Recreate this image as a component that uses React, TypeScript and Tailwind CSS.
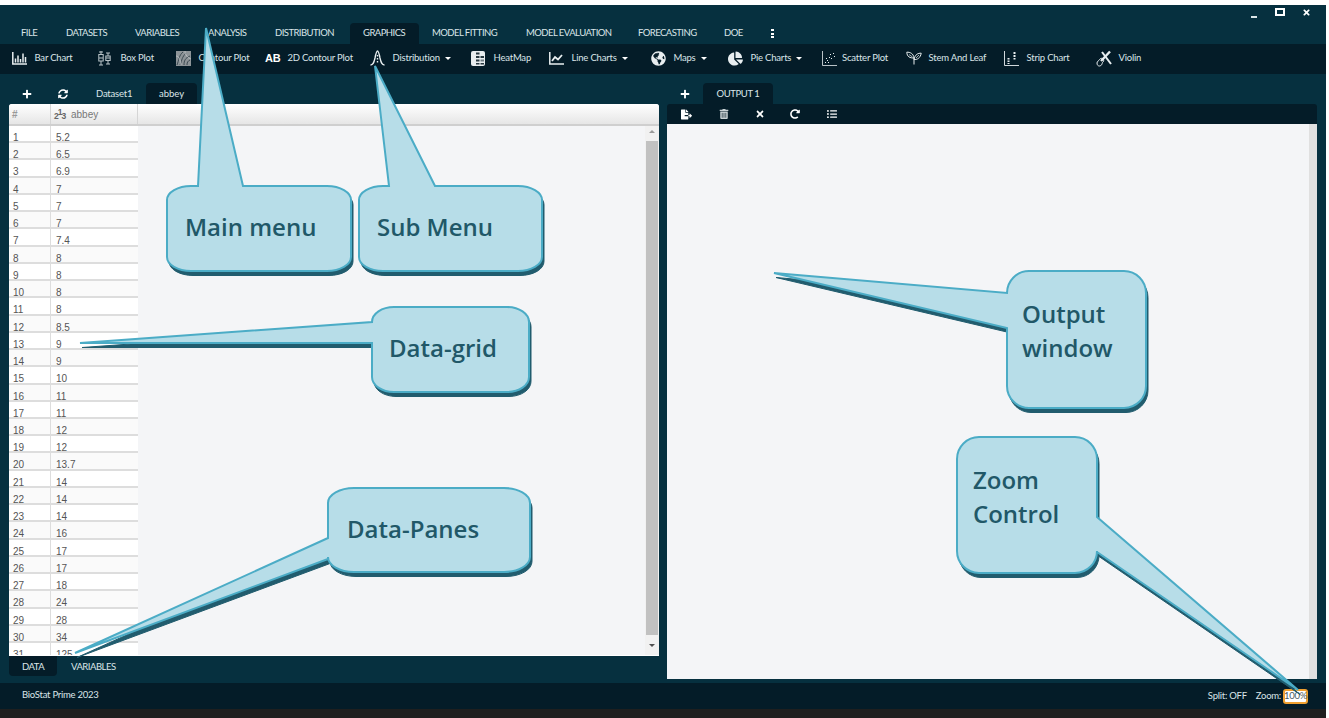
import type { ReactNode } from 'react'
import {
  FaChartPie, FaGlobeAmericas, FaPlus, FaSyncAlt, FaTrashAlt, FaTimes, FaRedoAlt, FaListUl, FaFileExport,
} from 'react-icons/fa'

const rows = ['5.2','6.5','6.9','7','7','7','7.4','8','8','8','8','8.5','9','9','10','11','11','12','12','13.7','14','14','14','16','17','17','18','24','28','34','125']

const menu = [
  { label: 'FILE', w: 'w-[45px]' },
  { label: 'DATASETS', w: 'w-[69px]' },
  { label: 'VARIABLES', w: 'w-[73px]' },
  { label: 'ANALYSIS', w: 'w-[67px]' },
  { label: 'DISTRIBUTION', w: 'w-[88px]' },
  { label: 'GRAPHICS', w: 'w-[69px]', active: true },
  { label: 'MODEL FITTING', w: 'w-[94px]' },
  { label: 'MODEL EVALUATION', w: 'w-[112px]' },
  { label: 'FORECASTING', w: 'w-[86px]' },
  { label: 'DOE', w: 'w-[47px]' },
]

function BarIcon() {
  return (
    <svg width="15" height="13" viewBox="0 0 15 13" fill="none" stroke="currentColor">
      <path d="M.8 0v12H15" strokeWidth="1.500" />
      <path d="M3.500 10.500V6.500M6 10.500V3.500M8.500 10.500V7M11 10.500V1.500M13.500 10.500V5" strokeWidth="1.500" />
    </svg>
  )
}

function BoxIcon() {
  return (
    <svg width="13" height="15" viewBox="0 0 13 15" fill="none" stroke="#b9c4c8" strokeWidth="1">
      <path d="M3 0v3M1 1h4M3 10v4M1 14h4M10 2v3M8 2h4M10 10v3M8 13h4" />
      <rect x=".8" y="3.500" width="4.400" height="6.500" />
      <rect x="7.800" y="5" width="4.400" height="4.500" />
      <path d="M1 7h4M8 7h4" />
    </svg>
  )
}

function ContourIcon() {
  return (
    <svg width="15" height="15" viewBox="0 0 15 15" fill="none">
      <rect width="15" height="15" fill="#8d9498" />
      <path d="M1 14C3 9 3 4 7 1M4 14C6 9 6 6 10 2M8 14C8 10 9 7 14 5M11 14c0-3 1-4 3-5" stroke="#3b4a52" strokeWidth="1" />
      <path d="M0 5c3 0 4 3 5 9M9 0c0 4 3 7 6 8" stroke="#c9cdd0" strokeWidth=".7" />
    </svg>
  )
}

function BellIcon() {
  return (
    <svg width="15" height="16" viewBox="0 0 15 16" fill="none" stroke="currentColor" strokeWidth="1.400">
      <path d="M.5 15c3 0 3.500-3 4.500-7C5.800 4 6.500 1 7.500 1s1.700 3 2.500 7c1 4 1.500 7 4.500 7" />
      <path d="M7.500 5v9" strokeDasharray="1.500 1.500" />
    </svg>
  )
}

function HeatIcon() {
  return (
    <svg width="14" height="15" viewBox="0 0 14 15">
      <rect width="14" height="15" rx="2" fill="#e8edef" />
      <path d="M5 1.500h3.500v2H5zM5 5h3.500v2H5zM9.500 5H13v2H9.500zM5 8.500h3.500v2H5zM9.500 12H13v1.500H9.500zM5 12h3.500v1.500H5z" fill="#26373f" />
      <path d="M9.500 8.500H13v2H9.500z" fill="#6f7c82" />
    </svg>
  )
}

function LineIcon() {
  return (
    <svg width="15" height="13" viewBox="0 0 15 13" fill="none" stroke="currentColor">
      <path d="M.8 0v12H15" strokeWidth="1.500" />
      <path d="M3 9l3-4 3 2.500L13 3" strokeWidth="1.800" />
    </svg>
  )
}

function ScatterIcon() {
  return (
    <svg width="15" height="15" viewBox="0 0 15 15" fill="currentColor">
      <path d="M.5 0v14.500H15" fill="none" stroke="currentColor" strokeWidth=".8" />
      <path d="M3 11h1v1H3zM5 9h1v1H5zM4 7h1v1H4zM7 6h1v1H7zM9 7h1v1H9zM8 3h1v1H8zM11 2h1v1h-1zM12 5h1v1h-1zM6 11h1v1H6z" />
    </svg>
  )
}

function LeafIcon() {
  return (
    <svg width="16" height="14" viewBox="0 0 16 14" fill="none" stroke="currentColor" strokeWidth="1">
      <path d="M8 13.500V7M8 7C4 7 1 6 .8 1.200 4 1 7.500 2.500 8 7zM8 8.500c3 .5 6.500-1.500 7.200-6.300C12 2 9 3.500 8 8.500z" />
      <path d="M3 3.500 6.500 6M13 4l-3 3" strokeWidth=".7" />
    </svg>
  )
}

function StripIcon() {
  return (
    <svg width="15" height="15" viewBox="0 0 15 15" fill="currentColor">
      <path d="M.5 0v14.500H15" fill="none" stroke="currentColor" strokeWidth=".9" />
      <path d="M3.500 7h2v1.500h-2zM3.500 9.500h2V11h-2zM3.500 12h2v1h-2zM9.500 1h2v2h-2zM9.500 4h2v2h-2zM9.500 7h2v1.500h-2z" />
    </svg>
  )
}

function ViolinIcon() {
  return (
    <svg width="17" height="17" viewBox="0 0 17 17" fill="none" stroke="currentColor">
      <path d="M1 13c0-2 2-2 2.500-3.500C4.500 8 6 8 7 9s1 2.500-.500 3.500C6 14 5.500 16 3.500 16 2 16 1 15 1 13z" strokeWidth="1" />
      <path d="M5 11 14 1.500" strokeWidth="2.400" />
      <path d="M6 2l9 12" strokeWidth="2" />
    </svg>
  )
}

const tools: { label: string; icon: ReactNode; w: string; iw?: string; caret?: boolean }[] = [
  { label: 'Bar Chart', icon: <BarIcon />, w: 'w-[86px]' },
  { label: 'Box Plot', icon: <BoxIcon />, w: 'w-[78px]' },
  { label: 'Contour Plot', icon: <ContourIcon />, w: 'w-[89px]' },
  { label: '2D Contour Plot', icon: <span className="text-[11px] font-bold font-['Liberation_Sans',sans-serif] text-white">AB</span>, w: 'w-[105px]' },
  { label: 'Distribution', icon: <BellIcon />, w: 'w-[101px]', caret: true },
  { label: 'HeatMap', icon: <HeatIcon />, w: 'w-[78px]' },
  { label: 'Line Charts', icon: <LineIcon />, w: 'w-[102px]', caret: true },
  { label: 'Maps', icon: <FaGlobeAmericas size={15} />, w: 'w-[77px]', caret: true },
  { label: 'Pie Charts', icon: <FaChartPie size={15} />, w: 'w-[94px]', caret: true },
  { label: 'Scatter Plot', icon: <ScatterIcon />, w: 'w-[84px]', iw: 'w-[20px]' },
  { label: 'Stem And Leaf', icon: <LeafIcon />, w: 'w-[98px]' },
  { label: 'Strip Chart', icon: <StripIcon />, w: 'w-[92px]' },
  { label: 'Violin', icon: <ViolinIcon />, w: 'w-[60px]' },
]

type Tail = { side: 'top' | 'left' | 'right'; a: number; b: number; tx: number; ty: number }

// rounded box with a pointer let into one of its sides
function balloon(x: number, y: number, w: number, h: number, rx: number, ry: number, tail?: Tail) {
  const r = x + w
  const bt = y + h
  const arc = (ex: number, ey: number) => `A${rx} ${ry} 0 0 1 ${ex} ${ey}`
  let d = `M${x + rx} ${y}`
  if (tail?.side === 'top') d += `L${tail.a} ${y}L${tail.tx} ${tail.ty}L${tail.b} ${y}`
  d += `L${r - rx} ${y}` + arc(r, y + ry)
  if (tail?.side === 'right') d += `L${r} ${tail.a}L${tail.tx} ${tail.ty}L${r} ${tail.b}`
  d += `L${r} ${bt - ry}` + arc(r - rx, bt) + `L${x + rx} ${bt}` + arc(x, bt - ry)
  if (tail?.side === 'left') d += `L${x} ${tail.b}L${tail.tx} ${tail.ty}L${x} ${tail.a}`
  d += `L${x} ${y + ry}` + arc(x + rx, y) + 'Z'
  return d
}

const callouts = [
  { box: [167, 186, 184, 85, 24, 14], tail: { side: 'top', a: 198, b: 243, tx: 206, ty: 28 } as Tail, bodyShadow: true, lines: [['Main menu', 185, 236]] },
  { box: [359, 186, 183, 85, 24, 14], tail: { side: 'top', a: 389, b: 435, tx: 375, ty: 66 } as Tail, bodyShadow: true, lines: [['Sub Menu', 377, 236]] },
  { box: [372, 307, 157, 85, 22, 15], tail: { side: 'left', a: 322, b: 343, tx: 80, ty: 343 } as Tail, lines: [['Data-grid', 389, 357]] },
  { box: [328, 488, 202, 84, 26, 15], tail: { side: 'left', a: 538, b: 559, tx: 75, ty: 653 } as Tail, lines: [['Data-Panes', 347, 538]] },
  { box: [1007, 271, 139, 137, 22, 22], tail: { side: 'left', a: 293, b: 328, tx: 774, ty: 273 } as Tail, lines: [['Output', 1022, 323], ['window', 1022, 357]] },
  { box: [957, 437, 140, 136, 22, 22], tail: { side: 'right', a: 517, b: 552, tx: 1298, ty: 690 } as Tail, lines: [['Zoom', 973, 489], ['Control', 973, 523]] },
]

function Overlay() {
  return (
    <svg className="absolute inset-0 pointer-events-none" width="1329" height="718" viewBox="0 0 1329 718">
      {callouts.map(c => {
        const [x, y, w, h, rx, ry] = c.box
        const d = balloon(x, y, w, h, rx, ry, c.tail)
        return (
          <g key={c.lines[0][0] as string}>
            <path d={c.bodyShadow ? balloon(x, y, w, h, rx, ry) : d} fill="#215c6e" stroke="#215c6e" strokeWidth="1" transform="translate(2 4.500)" />
            <path d={d} fill="#b7dde8" stroke="#4bacc6" strokeWidth="2" />
            {c.lines.map(([t, tx, ty]) => (
              <text key={t as string} x={tx as number} y={ty as number} fill="#215868" className="font-['Open_Sans',sans-serif] font-semibold text-[24px]">
                {t}
              </text>
            ))}
          </g>
        )
      })}
    </svg>
  )
}

function DataGrid() {
  return (
    <div className="flex-1 min-h-0 bg-[#f4f5f7] rounded-t-[3px] overflow-hidden relative font-['Liberation_Sans',sans-serif] text-[10px] text-[#555] border-b border-white">
      <div className="h-[22px] flex border-b-2 border-[#cfcfcf] bg-gradient-to-b from-white to-[#e6e6e6]">
        <div className="w-[42px] border-r border-[#d5d5d5] pl-[3px] pt-px flex items-center font-bold text-[#999]">#</div>
        <div className="w-[87px] border-r border-[#d5d5d5] pl-[3px] pt-px flex items-center text-[#777]">
          <span className="w-[17px] flex text-[8.500px] font-bold text-[#666]">
            <span className="translate-y-[2px]">2</span>
            <span className="-translate-y-[2px] -ml-[1px]">1</span>
            <span className="translate-y-[2px] -ml-[1px]">3</span>
          </span>
          <span className="text-[10px]">abbey</span>
        </div>
      </div>
      <div className="w-[129px]">
        {rows.map((v, i) => (
          <div key={i} className={`h-[17.240px] flex items-center border-b-2 border-[#dddddd] ${i % 2 ? 'bg-[#fafafa]' : 'bg-white'}`}>
            <div className="w-[42px] h-full border-r border-[#dddddd] pl-[4px] pt-[7px] leading-[10px]">{i + 1}</div>
            <div className="flex-1 pl-[5px] pt-[7px] h-full leading-[10px]">{v}</div>
          </div>
        ))}
      </div>
      {/* scrollbar */}
      <div className="absolute right-0 top-[22px] bottom-0 w-[14px] flex flex-col items-center bg-[#f1f1f1]">
        <div className="mt-[4px] w-0 h-0 border-x-[3px] border-x-transparent border-b-[3px] border-b-[#9a9a9a]" />
        <div className="mt-[8px] w-[12px] flex-1 bg-[#c1c1c1]" />
        <div className="mt-[9px] mb-[8px] w-0 h-0 border-x-[3px] border-x-transparent border-t-[3px] border-t-[#505050]" />
      </div>
    </div>
  )
}

export default function App() {
  return (
    <div className="w-[1329px] h-[718px] bg-white pt-[5px] relative overflow-hidden font-['Lato',sans-serif] text-[9.500px] text-[#dbe5e8]">
      <div className="w-[1326px] h-[713px] flex flex-col bg-[#06303f]">
        {/* window controls */}
        <div className="h-[18px] shrink-0 flex justify-end items-start text-white">
          <div className="mt-[11px] mr-[18px] w-[6px] h-[2px] bg-[#dbe5e8]" />
          <div className="mt-[3px] mr-[17px] w-[10px] h-[8px] border-2 border-white" />
          <FaTimes size={9} className="mt-[3px] mr-[15px]" />
        </div>

        {/* main menu */}
        <div className="h-[21px] flex pl-[8px] shrink-0 tracking-[-0.550px]">
          {menu.map(m => (
            <div key={m.label} className={`${m.w} h-full pl-[13px] flex items-center whitespace-nowrap ${m.active ? 'bg-[#041c28] rounded-t-[4px]' : ''}`}>
              {m.label}
            </div>
          ))}
          <div className="flex flex-col gap-[1.500px] justify-center ml-[13px]">
            <span className="w-[3px] h-[2px] bg-white" />
            <span className="w-[3px] h-[2px] bg-white" />
            <span className="w-[3px] h-[2px] bg-white" />
          </div>
        </div>

        {/* sub menu */}
        <div className="h-[30px] shrink-0 flex items-center pl-[12px] pb-[2px] bg-[#041c28] tracking-[-0.200px]">
          {tools.map(t => (
            <div key={t.label} className={`${t.w} flex items-center whitespace-nowrap`}>
              <span className={`${t.iw ?? 'w-[22.500px]'} flex items-center text-[#e8eef0]`}>{t.icon}</span>
              <span>{t.label}</span>
              {t.caret && <span className="ml-[5px] w-0 h-0 border-x-[3px] border-x-transparent border-t-[3px] border-t-white" />}
            </div>
          ))}
        </div>

        {/* panes */}
        <div className="flex-1 min-h-0 flex pl-[9px] pr-[9px] gap-[8px]">
          <div className="w-[650px] flex flex-col">
            <div className="h-[30px] shrink-0 flex items-end">
              <div className="w-[137px] h-[21px] flex items-center">
                <FaPlus size={10} className="ml-[13px] text-white" />
                <FaSyncAlt size={10} className="ml-[26px] text-white" />
                <span className="ml-[28px] pt-px tracking-[-0.200px]">Dataset1</span>
              </div>
              <div className="w-[51px] h-[21px] pt-px bg-[#041c28] rounded-t-[4px] flex items-center justify-center">abbey</div>
            </div>
            <DataGrid />
            <div className="h-[27px] shrink-0 flex items-start tracking-[-0.500px]">
              <div className="w-[48px] h-[20px] pt-[2px] bg-[#041c28] rounded-b-[4px] flex items-center justify-center">DATA</div>
              <div className="ml-[14px] h-[20px] pt-[2px] flex items-center">VARIABLES</div>
            </div>
          </div>

          <div className="w-[650px] flex flex-col">
            <div className="h-[30px] shrink-0 flex items-end">
              <div className="w-[36px] h-[21px] flex items-center">
                <FaPlus size={10} className="ml-[13px] text-white" />
              </div>
              <div className="w-[70px] h-[21px] pt-px bg-[#041c28] rounded-t-[4px] flex items-center justify-center tracking-[-0.400px]">OUTPUT 1</div>
            </div>
            <div className="h-[20px] shrink-0 bg-[#041c28] rounded-t-[3px] flex items-center text-white">
              <FaFileExport size={11} className="ml-[14px]" />
              <FaTrashAlt size={10} className="ml-[27px] text-[#c9d2d5]" />
              <FaTimes size={10} className="ml-[26px]" />
              <FaRedoAlt size={10} className="ml-[25px]" />
              <FaListUl size={10} className="ml-[27px]" />
            </div>
            <div className="h-[555px] shrink-0 bg-[#f4f5f7] flex justify-end">
              <div className="w-[8px] bg-[#e0e0e0]" />
            </div>
          </div>
        </div>

        {/* status bar */}
        <div className="h-[26px] shrink-0 bg-[#041c28] flex items-center pl-[22px] pr-[18px] tracking-[-0.250px]">
          <span className="flex-1 -mt-px">BioStat Prime 2023</span>
          <span className="mr-[9px]">Split: OFF</span>
          <span className="mr-[2px]">Zoom:</span>
          <span className="w-[25px] h-[15px] bg-white border-2 border-[#f0a030] rounded-[3px] flex items-center justify-center text-[#4a5a60]">100%</span>
        </div>
        <div className="h-[9px] shrink-0 bg-[#1f1f1f]" />
      </div>
      <Overlay />
    </div>
  )
}
